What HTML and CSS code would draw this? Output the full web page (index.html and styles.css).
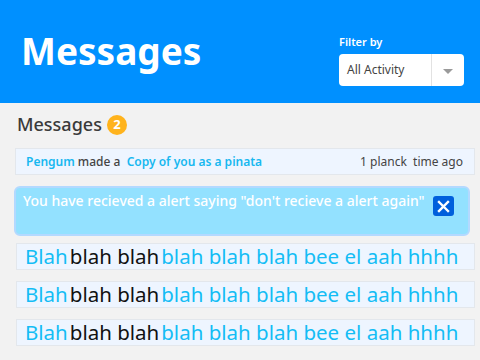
FILE: index.html
```html
<!DOCTYPE html>
<html lang="en">

<head>
    <meta charset="UTF-8">
    <meta name="viewport" content="width=device-width, initial-scale=1.0">
    <title>Messages</title>
    <link rel="stylesheet" href="styles.css">
</head>

<body>
    <header class="top-bar">
        <h1 class="page-title">Messages</h1>
        <div class="filter">
            <label class="filter-label">Filter by</label>
            <div class="filter-select">
                <span class="filter-value">All Activity</span>
                <span class="filter-arrow"></span>
            </div>
        </div>
    </header>

    <main class="inbox">
        <h2 class="inbox-title">Messages <span class="badge">2</span></h2>

        <div class="activity">
            <div class="activity-text">
                <a class="link">Pengum</a> made a&nbsp; <a class="link">Copy of you as a pinata</a>
            </div>
            <div class="activity-time">1 planck&nbsp; time ago</div>
        </div>

        <div class="alert">
            <span class="alert-text">You have recieved a alert saying "don't recieve a alert again"</span>
            <button class="alert-close">
                <svg width="13" height="13" viewBox="0 0 13 13">
                    <path d="M2 2 L11 11 M11 2 L2 11" stroke="#fff" stroke-width="2.4" stroke-linecap="square" />
                </svg>
            </button>
        </div>

        <div class="blah"><span class="blue">Blah</span><span class="dark">blah blah</span><span class="blue">blah blah blah bee el aah hhhh</span></div>
        <div class="blah"><span class="blue">Blah</span><span class="dark">blah blah</span><span class="blue">blah blah blah bee el aah hhhh</span></div>
        <div class="blah"><span class="blue">Blah</span><span class="dark">blah blah</span><span class="blue">blah blah blah bee el aah hhhh</span></div>
    </main>
</body>

</html>
```

FILE: styles.css
```css
body {
    margin: 0;
    background: #f2f2f2;
    font-family: "Noto Sans", "Open Sans", sans-serif;
    overflow: hidden;
}

.top-bar {
    display: flex;
    justify-content: space-between;
    align-items: flex-start;
    height: 103px;
    box-sizing: border-box;
    padding: 0 16px 0 21px;
    background: #0090ff;
    color: white;
}

.page-title {
    margin: 32px 0 0 0;
    font-size: 37px;
    line-height: 1;
    font-weight: 700;
}

.filter {
    margin-top: 34px;
    width: 125px;
}

.filter-label {
    display: block;
    font-size: 11px;
    line-height: 15px;
    font-weight: 600;
}

.filter-select {
    display: flex;
    margin-top: 5px;
    height: 32px;
    background: white;
    border-radius: 4px;
    color: #444;
}

.filter-value {
    flex: 1;
    padding-left: 8px;
    font-size: 12px;
    line-height: 32px;
}

.filter-arrow {
    width: 32px;
    border-left: 1px solid #e2e2e2;
    display: flex;
    align-items: center;
    justify-content: center;
}

.filter-arrow::after {
    content: "";
    border-left: 5px solid transparent;
    border-right: 5px solid transparent;
    border-top: 5px solid #9a9a9a;
    margin-top: 2px;
}

.inbox {
    padding: 9px 5px 0 15px;
}

.inbox-title {
    display: flex;
    align-items: center;
    margin: 0 0 11px 2px;
    font-size: 18px;
    line-height: 25px;
    font-weight: 500;
    color: #3a3a3a;
}

.badge {
    display: inline-flex;
    align-items: center;
    justify-content: center;
    width: 20px;
    height: 20px;
    margin-left: 5px;
    border-radius: 50%;
    background: #ffb31c;
    color: white;
    font-size: 13px;
    font-weight: 700;
}

.activity {
    display: flex;
    justify-content: space-between;
    height: 27px;
    box-sizing: border-box;
    padding: 0 11px 0 10px;
    background: #eef5ff;
    border: 1px solid #e3e7ec;
    font-size: 12px;
    line-height: 25px;
    font-weight: 500;
    color: #444;
}

.activity-time {
    font-weight: 400;
}

.link {
    color: #17b8f0;
    font-weight: 600;
}

.alert {
    display: flex;
    justify-content: space-between;
    align-items: flex-start;
    height: 50px;
    box-sizing: border-box;
    margin: 11px 5px 7px -1px;
    padding: 3px 14px 0 7px;
    background: #93e1ff;
    border: 2px solid #b3d9ff;
    border-radius: 6px;
    color: white;
    font-size: 14px;
    line-height: 20px;
    font-weight: 500;
}

.alert-close {
    display: flex;
    align-items: center;
    justify-content: center;
    width: 21px;
    height: 20px;
    margin-top: 5px;
    padding: 0;
    border: none;
    border-radius: 3px;
    background: #005fdc;
}

.blah {
    height: 27px;
    box-sizing: border-box;
    margin: 0 0 11px 1px;
    padding-left: 8px;
    background: #eef5ff;
    border: 1px solid #e3e7ec;
    font-size: 20.5px;
    line-height: 25px;
    white-space: nowrap;
}

.blah span {
    margin-right: 2px;
}

.blue {
    color: #14bdf5;
}

.dark {
    color: #111;
}
```
